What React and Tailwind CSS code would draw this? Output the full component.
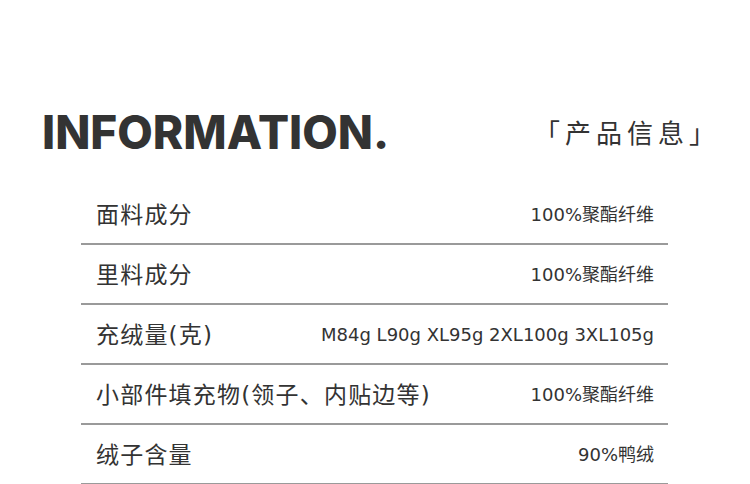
const rows = [
  { label: '面料成分', value: '100%聚酯纤维' },
  { label: '里料成分', value: '100%聚酯纤维' },
  { label: '充绒量(克)', value: 'M84g L90g XL95g 2XL100g 3XL105g' },
  { label: '小部件填充物(领子、内贴边等)', value: '100%聚酯纤维' },
  { label: '绒子含量', value: '90%鸭绒' },
];

export default function App() {
  return (
    <div className="w-[750px] h-[484px] overflow-hidden bg-white text-[#333] font-['Noto_Sans_CJK_SC',sans-serif]">
      <div className="flex items-center justify-between pl-[42px] pr-[30px] pt-[102px] h-[161px]">
        <h1 className="font-['Inter',sans-serif] font-[850] text-[46px] leading-none">
          INFORMATION.
        </h1>
        <div className="text-[26px] leading-none tracking-[5px] text-[#333]">「产品信息」</div>
      </div>
      <div className="ml-[81px] w-[587px] mt-[24px]">
        {rows.map((r) => (
          <div key={r.label} className="flex items-center justify-between h-[60px] pt-[2px] border-b-2 border-[#9a9a9a] pl-[15px] pr-[14px]">
            <span className="text-[23px] leading-none tracking-[1.2px] font-['DejaVu_Sans','Noto_Sans_CJK_SC',sans-serif]">{r.label}</span>
            <span className="text-[18px] leading-none font-['DejaVu_Sans','Noto_Sans_CJK_SC',sans-serif]">{r.value}</span>
          </div>
        ))}
      </div>
    </div>
  );
}
